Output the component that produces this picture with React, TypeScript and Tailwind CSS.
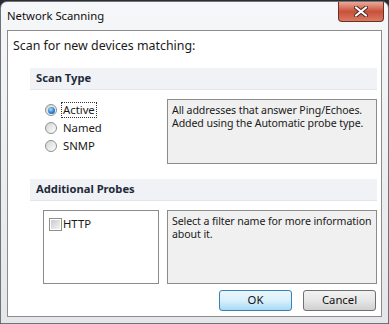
import React from "react";

const font = { fontFamily: '"Segoe UI", "Noto Sans", "Open Sans", sans-serif' };

function Radio({ checked, label, focus }: { checked?: boolean; label: string; focus?: boolean }) {
  return (
    <div className="flex h-[18px] items-center">
      <div className="flex h-[12px] w-[12px] items-center justify-center rounded-full border border-[#8e8f8f] bg-gradient-to-br from-[#d4d4d4] to-[#ffffff]">
        {checked && (
          <div className="h-[7px] w-[7px] rounded-full bg-[radial-gradient(circle_at_40%_35%,#a9dcfb_0%,#2c7fd0_55%,#0f4d97_100%)]" />
        )}
      </div>
      <span
        className={
          "ml-[5px] px-[1px] leading-[14px] " +
          (focus ? "outline outline-1 outline-dotted outline-[#333]" : "")
        }
      >
        {label}
      </span>
    </div>
  );
}

export default function App() {
  return (
    <div className="h-[324px] w-[389px] overflow-hidden bg-[#2a2c30]" style={font}>
      <div className="mt-[1px] flex h-[323px] flex-col rounded-t-[7px] border border-[#6f7378] bg-gradient-to-b from-[#f6f7f8] via-[#eceef0] to-[#e4e6e9]">
        <div className="flex h-[28px] items-start justify-between">
          <span className="ml-[6px] mt-[6px] whitespace-nowrap text-[11.3px] leading-[16px] text-[#101010]">Network Scanning</span>
          <div className="mr-[4px] flex h-[20px] w-[46px] items-center justify-center rounded-b-[4px] border border-t-0 border-[#6e2f25] bg-gradient-to-b from-[#e9a899] via-[#c9503a] to-[#d97a62]">
            <svg width="14" height="11" viewBox="0 0 14 11">
              <path
                d="M2 1.5 L12 9.5 M12 1.5 L2 9.5"
                stroke="#4a2a25"
                strokeWidth="4"
                strokeLinecap="round"
              />
              <path
                d="M2 1.5 L12 9.5 M12 1.5 L2 9.5"
                stroke="#ffffff"
                strokeWidth="2.2"
                strokeLinecap="round"
              />
            </svg>
          </div>
        </div>
        <div className="mx-[6px] flex h-[287px] flex-col border border-[#8c8c8c] bg-white text-[11.3px] text-[#1a1a1a]">
          <div className="ml-[5px] mt-[6px] h-[17px] whitespace-nowrap text-[12.4px] leading-[17px]">Scan for new devices matching:</div>
          <div className="ml-[22px] mr-[4px] mt-[14px] flex h-[22px] items-center whitespace-nowrap border-b border-[#e3e6ea] bg-[#f0f2f5] pl-[6px] text-[11.2px] font-bold text-[#1e2a3a]">
            Scan Type
          </div>
          <div className="mt-[9px] flex">
            <div className="ml-[37px] flex w-[122px] flex-col pt-[2px]">
              <Radio checked label="Active" focus />
              <Radio label="Named" />
              <Radio label="SNMP" />
            </div>
            <div className="h-[65px] w-[210px] whitespace-nowrap border border-[#8c8c8c] bg-[#f0f0f0] px-[4px] pt-[4px] text-[10.6px] leading-[13px] tracking-[-0.1px]">
              All addresses that answer Ping/Echoes.
              <br />
              Added using the Automatic probe type.
            </div>
          </div>
          <div className="ml-[22px] mr-[4px] mt-[15px] flex h-[22px] items-center whitespace-nowrap border-b border-[#e3e6ea] bg-[#f0f2f5] pl-[6px] text-[11.2px] font-bold text-[#1e2a3a]">
            Additional Probes
          </div>
          <div className="mt-[9px] flex">
            <div className="ml-[35px] h-[74px] w-[116px] border border-[#8c8c8c] bg-white pl-[5px] pt-[6px]">
              <div className="flex items-center">
                <div className="flex h-[13px] w-[13px] items-center justify-center border border-[#8e8f8f] bg-white">
                  <div className="h-[9px] w-[9px] bg-gradient-to-br from-[#cbcbcb] to-[#f4f4f4]" />
                </div>
                <span className="ml-[1px] leading-[14px]">HTTP</span>
              </div>
            </div>
            <div className="ml-[8px] h-[74px] w-[210px] whitespace-nowrap border border-[#8c8c8c] bg-[#f0f0f0] px-[4px] pt-[4px] text-[10.6px] leading-[13px] tracking-[-0.1px]">
              Select a filter name for more information
              <br />
              about it.
            </div>
          </div>
          <div className="mr-[5px] mt-[6px] flex justify-end gap-[11px]">
            <button className="flex h-[21px] w-[73px] items-center justify-center rounded-[3px] border border-[#3c7fb1] bg-gradient-to-b from-[#eaf6fd] via-[#d9f0fc] to-[#a7d9f5] text-[11.3px] text-[#111]">
              OK
            </button>
            <button className="flex h-[21px] w-[73px] items-center justify-center rounded-[3px] border border-[#707070] bg-gradient-to-b from-[#f2f2f2] via-[#e6e6e6] to-[#d0d0d0] text-[11.3px] text-[#111]">
              Cancel
            </button>
          </div>
        </div>
      </div>
    </div>
  );
}
